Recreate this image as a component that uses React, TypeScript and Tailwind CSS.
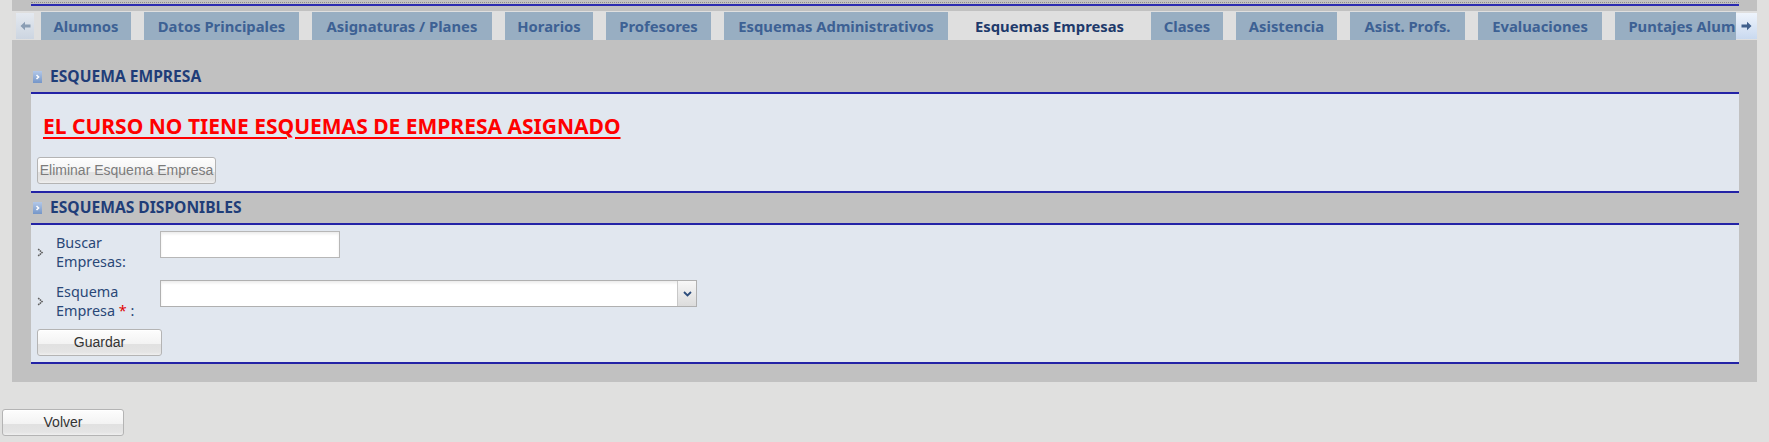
import React from 'react';

const tabs = [
  { label: 'Alumnos', w: 'w-[90px]' },
  { label: 'Datos Principales', w: 'w-[155px]' },
  { label: 'Asignaturas / Planes', w: 'w-[180px]' },
  { label: 'Horarios', w: 'w-[88px]' },
  { label: 'Profesores', w: 'w-[105px]' },
  { label: 'Esquemas Administrativos', w: 'w-[224px]' },
  { label: 'Esquemas Empresas', w: 'w-[177px]', active: true },
  { label: 'Clases', w: 'w-[72px]' },
  { label: 'Asistencia', w: 'w-[101px]' },
  { label: 'Asist. Profs.', w: 'w-[115px]' },
  { label: 'Evaluaciones', w: 'w-[124px]' },
  { label: 'Puntajes Alumnos', w: 'w-[160px]' },
];

function HeaderIcon() {
  return (
    <svg width="9" height="12" viewBox="0 0 9 12" className="shrink-0">
      <defs>
        <linearGradient id="hdrIcon" x1="0" y1="0" x2="0" y2="1">
          <stop offset="0" stopColor="#b3c8e8" />
          <stop offset="1" stopColor="#7596c8" />
        </linearGradient>
      </defs>
      <rect width="9" height="12" fill="url(#hdrIcon)" />
      <path d="M3.5 4 L5.6 6 L3.5 8" stroke="#fff" strokeWidth="1.5" fill="none" />
    </svg>
  );
}

function Bullet() {
  return (
    <svg width="7" height="9" viewBox="0 0 7 9">
      <path d="M1.2 1 L5 4.5 L1.2 8" stroke="#5f5f5f" strokeWidth="1.6" strokeDasharray="1.6 0.6" fill="none" />
    </svg>
  );
}

function SectionHeader({ title, h }: { title: string; h: string }) {
  return (
    <div className={`flex items-center pl-[2px] ${h}`}>
      <HeaderIcon />
      <span className="ml-[8px] text-[15.6px] font-bold text-[#1f3d78]">{title}</span>
    </div>
  );
}

function GrayButton({ label, w, muted }: { label: string; w: string; muted?: boolean }) {
  return (
    <button
      className={`flex h-[27px] items-center justify-center rounded-[3px] border border-[#b4b4b4] bg-[linear-gradient(#fdfdfd_0%,#f3f3f3_55%,#e1e1e1_58%,#e4e4e4_88%,#efefef_100%)] font-['Liberation_Sans',Arial,sans-serif] text-[14px] shadow-[inset_0_1px_0_#fff] ${w} ${muted ? 'text-[#7b7b7b]' : 'text-[#333]'}`}
    >
      {label}
    </button>
  );
}

function FieldRow({ children, label }: { children: React.ReactNode; label: React.ReactNode }) {
  return (
    <div className="flex h-[49px] items-start">
      <div className="mt-[2px] flex h-[38px] w-[19px] items-center">
        <Bullet />
      </div>
      <div className="mt-[2px] w-[104px] text-[14.4px] leading-[19px] text-[#2a4777]">{label}</div>
      {children}
    </div>
  );
}

export default function App() {
  return (
    <div className="min-h-screen bg-[#e0e0df] font-['Noto_Sans',sans-serif]">
      <div className="ml-[12px] w-[1745px] bg-[#c1c1c1] pb-[18px]">
        {/* remains of the block above */}
        <div className="h-[11px] pl-[19px] pr-[18px] pt-[2px]">
          <div className="border-t border-dotted border-[#8c8c8c]" />
          <div className="mt-[1px] h-[2px] bg-[#2b2bb0]" />
        </div>

        {/* tabs */}
        <div className="flex h-[29px] items-start bg-[#dfdfdf] pl-[4px] pt-[1px]">
          <div className="mt-[1px] flex h-[26px] w-[18px] shrink-0 items-center justify-center bg-[linear-gradient(#e4e9f0,#ccd5e1)]">
            <svg width="11" height="10" viewBox="0 0 11 10">
              <path d="M0.5 5 L5 0.8 L5 3.4 L10.5 3.4 L10.5 6.6 L5 6.6 L5 9.2 Z" fill="#8a9db4" />
            </svg>
          </div>
          <div className="ml-[7px] flex flex-1 gap-[13px] overflow-hidden">
            {tabs.map((t) => (
              <div
                key={t.label}
                className={`flex h-[28px] shrink-0 items-center justify-center whitespace-nowrap text-[14.8px] font-bold ${t.w} ${
                  t.active ? 'bg-[#dfdfdf] text-[#1e3a6b]' : 'bg-[#98aec2] text-[#3d6194]'
                }`}
              >
                {t.label}
              </div>
            ))}
          </div>
          <div className="mt-[1px] flex h-[26px] w-[21px] shrink-0 items-center justify-center bg-[linear-gradient(#eef4fc,#c9d9ef)]">
            <svg width="11" height="10" viewBox="0 0 11 10">
              <path d="M10.5 5 L6 0.8 L6 3.4 L0.5 3.4 L0.5 6.6 L6 6.6 L6 9.2 Z" fill="#3f5f8c" />
            </svg>
          </div>
        </div>

        <div className="pl-[19px] pr-[18px] pt-[21px]">
          <SectionHeader title="ESQUEMA EMPRESA" h="h-[31px]" />
          <div className="border-y-2 border-[#2323a6] bg-[#e1e7ef] pl-[6px] pt-[19px] pb-[7px]">
            <div className="ml-[6px] text-[21px] font-bold leading-[26px] text-[#ff0000] underline decoration-[2px] underline-offset-[3px]">
              EL CURSO NO TIENE ESQUEMAS DE EMPRESA ASIGNADO
            </div>
            <div className="mt-[18px]">
              <GrayButton label="Eliminar Esquema Empresa" w="w-[179px]" muted />
            </div>
          </div>

          <SectionHeader title="ESQUEMAS DISPONIBLES" h="h-[30px]" />
          <div className="border-y-2 border-[#2323a6] bg-[#e1e7ef] pl-[6px] pt-[6px] pb-[6px]">
            <FieldRow label={<>Buscar<br />Empresas:</>}>
              <input className="h-[27px] w-[180px] border border-[#b7b7b7] bg-white shadow-[inset_0_2px_3px_rgba(0,0,0,0.08)] outline-none" />
            </FieldRow>
            <FieldRow
              label={
                <>
                  Esquema
                  <br />
                  Empresa <span className="text-[#e00000]">*</span> :
                </>
              }
            >
              <div className="flex h-[27px] w-[537px] border border-[#b0b0b0] bg-white shadow-[inset_0_2px_3px_rgba(0,0,0,0.08)]">
                <div className="flex-1" />
                <div className="flex w-[19px] items-center justify-center border-l border-[#c8c8c8] bg-[linear-gradient(#f7f7f7,#dcdcdc)]">
                  <svg width="9" height="6" viewBox="0 0 9 6">
                    <path d="M1 1 L4.5 4.5 L8 1" stroke="#2d4d7c" strokeWidth="1.8" fill="none" />
                  </svg>
                </div>
              </div>
            </FieldRow>
            <GrayButton label="Guardar" w="w-[125px]" />
          </div>
        </div>
      </div>

      <div className="ml-[2px] mt-[27px]">
        <GrayButton label="Volver" w="w-[122px]" />
      </div>
    </div>
  );
}
